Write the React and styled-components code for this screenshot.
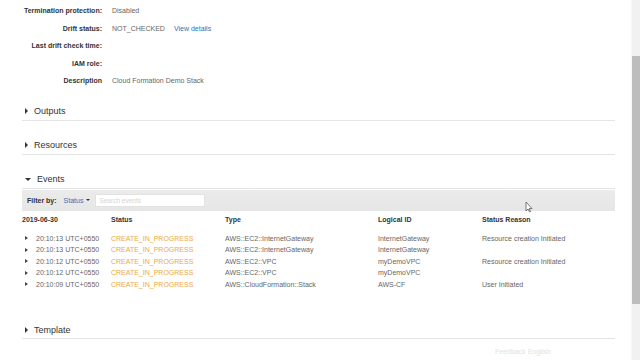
import styled, { createGlobalStyle } from "styled-components";

const GlobalStyle = createGlobalStyle`
  html, body {
    margin: 0;
    padding: 0;
    background: #fff;
  }
  body {
    font-family: "Liberation Sans", Arial, sans-serif;
  }
`;

const Page = styled.div`
  width: 640px;
  height: 360px;
  overflow: hidden;
  display: flex;
  position: relative;
  background: #fff;
`;

const Main = styled.main`
  flex: 1;
  padding: 2px 16px 0 22px;
  display: flex;
  flex-direction: column;
`;

const Scrollbar = styled.div`
  width: 8px;
  background: #f1f1f1;
  border-left: 1px solid #f7f7f7;
  padding-top: 56px;
`;

const Thumb = styled.div`
  height: 248px;
  background: #bdbdbd;
`;

const Details = styled.div`
  display: grid;
  grid-template-columns: 80px 1fr;
  column-gap: 10px;
  grid-auto-rows: 17.5px;
  align-items: center;
  font-size: 7px;
  margin-bottom: 13px;
`;

const Label = styled.div`
  font-weight: bold;
  color: #333;
  text-align: right;
`;

const Value = styled.div`
  color: #666;
  display: flex;
  gap: 9px;
`;

const Link = styled.span`
  color: #2f73b6;
`;

const Section = styled.section`
  margin-bottom: ${(p) => p.$gap ?? 16}px;
`;

const SectionHead = styled.div`
  height: 17px;
  display: flex;
  align-items: center;
  gap: 6px;
  padding-left: 3px;
  font-size: 9px;
  color: #333;
  border-bottom: 1px solid #e4e4e4;
`;

const Caret = styled.span`
  width: 0;
  height: 0;
  border-style: solid;
  ${(p) =>
    p.$open
      ? `border-width: 3.5px 3px 0 3px; border-color: #333 transparent transparent transparent;`
      : `border-width: 3px 0 3px 3.5px; border-color: transparent transparent transparent #333;`}
`;

const FilterBar = styled.div`
  margin-top: 1px;
  height: 21px;
  background: linear-gradient(#ebebeb, #e6e6e6);
  display: flex;
  align-items: center;
  padding-left: 5px;
  font-size: 7px;
`;

const FilterLabel = styled.span`
  font-weight: bold;
  color: #333;
  margin-right: 7px;
`;

const StatusMenu = styled.span`
  color: #2f73b6;
  display: flex;
  align-items: center;
  gap: 3px;
  margin-right: 5px;
`;

const SmallCaret = styled.span`
  border-style: solid;
  border-width: 2.5px 2px 0 2px;
  border-color: #333 transparent transparent transparent;
`;

const Search = styled.div`
  width: 110px;
  height: 13px;
  background: #fff;
  border: 1px solid #e2e2e2;
  box-sizing: border-box;
  display: flex;
  align-items: center;
  padding-left: 3px;
  color: #d4d4d4;
  font-size: 6.5px;
`;

const Table = styled.div`
  display: grid;
  grid-template-columns: 89px 114px 153px 104px 1fr;
  font-size: 7px;
  margin-bottom: 31px;
`;

const HeadCell = styled.div`
  font-weight: bold;
  color: #333;
  height: 17px;
  display: flex;
  align-items: center;
  margin-bottom: 5px;
`;

const Cell = styled.div`
  height: 11.5px;
  display: flex;
  align-items: center;
  gap: 8px;
  color: ${(p) => (p.$orange ? "#eda844" : "#666")};
  padding-left: ${(p) => (p.$first ? 3 : 0)}px;
`;

const RowCaret = styled.span`
  border-style: solid;
  border-width: 2.5px 0 2.5px 3px;
  border-color: transparent transparent transparent #444;
`;

const Footer = styled.div`
  margin-top: 9px;
  padding-left: 473px;
  font-size: 7px;
  color: #e2e2e2;
`;

const Cursor = styled.svg`
  position: absolute;
  left: 525px;
  top: 201px;
`;

const details = [
  ["Termination protection:", "Disabled"],
  ["Drift status:", "NOT_CHECKED", "View details"],
  ["Last drift check time:", ""],
  ["IAM role:", ""],
  ["Description", "Cloud Formation Demo Stack"],
];

const events = [
  ["20:10:13 UTC+0550", "AWS::EC2::InternetGateway", "InternetGateway", "Resource creation Initiated"],
  ["20:10:13 UTC+0550", "AWS::EC2::InternetGateway", "InternetGateway", ""],
  ["20:10:12 UTC+0550", "AWS::EC2::VPC", "myDemoVPC", "Resource creation Initiated"],
  ["20:10:12 UTC+0550", "AWS::EC2::VPC", "myDemoVPC", ""],
  ["20:10:09 UTC+0550", "AWS::CloudFormation::Stack", "AWS-CF", "User Initiated"],
];

const App = () => (
  <Page>
    <GlobalStyle />
    <Main>
      <Details>
        {details.map(([label, value, link]) => (
          <>
            <Label key={label}>{label}</Label>
            <Value>
              {value}
              {link && <Link>{link}</Link>}
            </Value>
          </>
        ))}
      </Details>

      <Section>
        <SectionHead>
          <Caret />
          Outputs
        </SectionHead>
      </Section>
      <Section>
        <SectionHead>
          <Caret />
          Resources
        </SectionHead>
      </Section>
      <Section $gap={0}>
        <SectionHead>
          <Caret $open />
          Events
        </SectionHead>
        <FilterBar>
          <FilterLabel>Filter by:</FilterLabel>
          <StatusMenu>
            Status <SmallCaret />
          </StatusMenu>
          <Search>Search events</Search>
        </FilterBar>
        <Table>
          <HeadCell>2019-06-30</HeadCell>
          <HeadCell>Status</HeadCell>
          <HeadCell>Type</HeadCell>
          <HeadCell>Logical ID</HeadCell>
          <HeadCell>Status Reason</HeadCell>
          {events.map(([time, type, id, reason], i) => (
            <>
              <Cell key={"t" + i} $first>
                <RowCaret />
                {time}
              </Cell>
              <Cell $orange>CREATE_IN_PROGRESS</Cell>
              <Cell>{type}</Cell>
              <Cell>{id}</Cell>
              <Cell>{reason}</Cell>
            </>
          ))}
        </Table>
      </Section>

      <Section $gap={0}>
        <SectionHead>
          <Caret />
          Template
        </SectionHead>
        <Footer>Feedback  English</Footer>
      </Section>
    </Main>
    <Scrollbar>
      <Thumb />
    </Scrollbar>
    <Cursor width="8" height="12" viewBox="0 0 8 12">
      <path d="M1 1 L1 10 L3 8 L4.5 11 L5.5 10.5 L4.2 7.6 L7 7.6 Z" fill="#fff" stroke="#555" strokeWidth="0.8" />
    </Cursor>
  </Page>
);

export default App;
